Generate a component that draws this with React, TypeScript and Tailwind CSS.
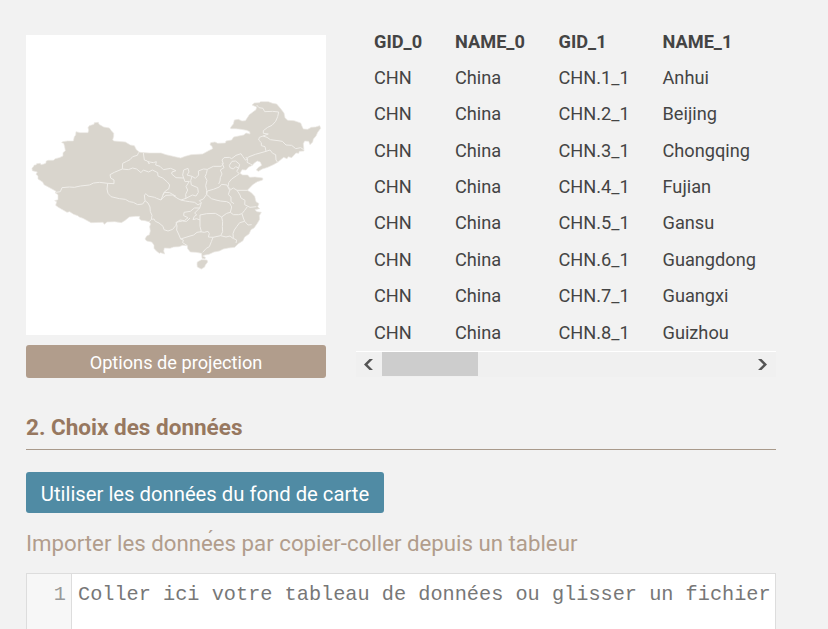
import React from "react";

const rows: [string, string][] = [
  ["CHN.1_1", "Anhui"],
  ["CHN.2_1", "Beijing"],
  ["CHN.3_1", "Chongqing"],
  ["CHN.4_1", "Fujian"],
  ["CHN.5_1", "Gansu"],
  ["CHN.6_1", "Guangdong"],
  ["CHN.7_1", "Guangxi"],
  ["CHN.8_1", "Guizhou"],
];

const mainland =
  "18,400 22,395 25,390 30,390 32,386 43,385 45,389 54,387 60,384 60,379 66,376 82,376 88,371 100,368 111,363 111,353 118,347 116,335 113,325 107,323 110,320 125,318 142,318 145,305 149,300 150,290 162,293 186,293 188,285 186,278 190,272 204,268 205,263 217,262 219,268 233,276 250,279 256,287 263,295 263,304 260,315 264,318 298,321 313,330 325,332 331,344 341,352 370,354 405,354 420,359 450,366 464,369 478,364 495,359 530,357 548,347 560,341 558,334 552,329 554,323 567,321 575,325 598,324 600,318 617,315 623,306 653,300 660,294 672,297 671,290 662,286 645,283 628,281 614,281 614,277 622,267 625,255 637,253 648,258 658,257 665,247 670,239 690,224 692,216 678,210 685,204 700,203 704,200 727,200 740,205 752,207 763,220 774,234 777,248 785,256 804,257 824,264 829,276 832,282 845,283 856,277 869,276 881,272 884,280 875,292 870,303 862,312 860,321 852,329 848,319 836,318 832,326 834,348 820,349 818,355 810,354 797,368 787,365 783,371 773,367 755,382 742,389 725,397 709,402 697,409 691,405 696,398 707,391 703,381 694,378 686,383 679,391 667,397 660,405 648,404 642,415 650,420 665,420 671,427 687,426 710,429 710,435 694,440 680,449 664,466 676,473 686,484 690,500 699,506 695,515 701,521 687,524 693,530 706,532 700,542 701,553 694,565 684,579 675,584 669,597 656,606 651,617 637,626 626,637 607,639 592,642 580,648 564,651 549,658 537,660 530,663 538,667 537,672 528,670 527,655 510,652 493,651 485,641 484,632 470,631 459,635 443,636 432,640 415,639 413,648 416,657 404,653 400,655 391,648 384,640 384,630 377,621 362,618 357,612 362,603 370,599 373,588 371,575 374,566 368,560 357,557 345,556 340,551 341,544 328,544 310,546 296,557 286,563 266,560 243,561 235,568 231,562 195,563 171,550 160,546 155,542 143,538 131,530 123,532 97,517 89,511 92,500 86,497 96,494 96,479 88,474 90,469 78,462 54,449 50,441 42,436 36,432 36,423 30,418 34,411 19,407";

const borders = [
  "338,352 334,361 320,365 312,374 302,379 290,385 289,402 265,412 252,419 254,429 264,435 264,446 245,445",
  "90,472 103,470 108,458 130,456 145,457 163,453 190,450 203,444 221,442 245,445 243,462 246,475 255,485 280,491 298,493 310,500 322,502 335,509 350,507 357,497 366,504 372,516 373,530 378,541 376,553 370,560",
  "289,402 307,404 320,399 332,402 345,413 352,405 368,411 379,405 395,413 396,423 410,429 424,441 431,450 428,462 418,468 411,480 405,495 392,490 386,487 366,483 360,476 355,480 357,497",
  "352,353 355,375 364,378 370,387 366,380 382,383 391,380 389,390 402,394 412,404 434,400 450,407 438,411 437,417 450,428 473,429 470,420 473,405 486,400 489,411 483,420 498,424 508,430 518,420 517,408 532,402 544,403 562,394 586,394 592,386 588,375 594,368 610,367 617,371 630,361 645,356 650,364 659,376 667,366 688,358 720,349 717,335 706,332 706,323 698,315 700,307 711,303 723,307 733,314 756,317 769,319 780,330 797,331 809,341 824,338 833,344",
  "692,210 699,218 711,220 716,230 740,229 758,231 755,245 749,259 738,271 725,277 712,287 712,295 727,297 711,303",
  "720,349 732,345 740,355 749,359 750,375 755,382",
  "659,366 665,372 663,382 673,387 680,391",
  "610,391 618,379 629,378 641,388 638,399 629,395 622,402 612,398 610,391",
  "638,399 632,409 640,416 632,422 617,432 608,443 606,455 613,462",
  "588,384 594,398 583,405 588,417 583,428 582,438 578,447",
  "544,403 541,416 537,425 543,436 539,452 542,466 541,478",
  "473,429 477,440 490,439 480,455 485,465 479,478 480,490 465,495 456,491 439,480 420,481 410,489 405,495",
  "480,490 499,480 510,483 517,472 515,458 496,450 494,437 498,424",
  "411,480 414,472 431,473 450,484",
  "464,495 478,498 490,500 506,502 516,510 526,503 520,497 532,492 542,478 544,468 562,463 580,456 587,448 603,450 611,466 622,459 633,466 664,466",
  "542,478 556,491 570,495 583,498 602,500 611,504 617,516 613,532 602,535 587,546 568,535 542,536 522,540 522,555 512,551 501,554 505,544 512,540 506,534 521,519 526,503",
  "521,519 505,519 493,529 474,532 473,542 486,548 475,557 462,555 453,561 449,572 440,583 426,588 414,584 411,574 399,564 388,559 384,552 376,553",
  "492,549 482,559 469,558 450,562 453,573 452,585 459,600 464,612 489,604 503,600 513,592 526,590 522,574 522,555",
  "464,612 472,615 470,623 484,632",
  "522,590 535,592 546,589 550,596 547,606 561,607 584,602 590,590 589,575 590,560 587,546",
  "561,607 556,620 550,635 541,640 530,652",
  "611,466 607,479 615,486 615,500 624,506",
  "633,466 642,480 645,489 657,496 656,509 672,517 691,515",
  "613,532 622,539 638,539 648,536 656,526 664,515",
  "648,536 652,549 656,559 666,570 677,569",
  "656,559 641,563 632,575 625,585 621,596 622,610 632,615 630,624",
  "584,602 600,606 612,603 622,611",
];

function ChinaMap() {
  return (
    <svg className="size-full" viewBox="0 0 900 900" fill="#d9d5cd" stroke="#ebe9e4" strokeWidth="2" strokeLinejoin="round">
      <polygon points={mainland} />
      <polygon points="514,681 527,674 543,675 545,681 538,690 536,696 526,702 514,696 513,687" />
      <g fill="none" stroke="#f0eeea" strokeWidth="3">
        {borders.map((points) => <polyline key={points} points={points} />)}
      </g>
    </svg>
  );
}

const columns = "grid grid-cols-[81px_103.5px_104px_1fr] pl-[18px]";

export default function App() {
  return (
    <main className="h-[629px] w-[828px] overflow-hidden bg-[#f2f2f2] px-[26px] pt-[35px] pr-[52px] font-[Roboto,sans-serif] text-[#444]">
      <div className="flex justify-between">
        <section className="w-[300px]">
          <div className="h-[300px] bg-white"><ChinaMap /></div>
          <button className="mt-[10px] flex h-[33px] w-full items-center justify-center rounded-[3px] bg-[#b19d8c] pt-[2px] text-[18.2px] text-white">
            Options de projection
          </button>
        </section>
        <section className="-mt-[11px] w-[420px] text-[18.2px] leading-[36.4px]">
          <div className={`${columns} h-[36px] font-bold`}>
            <span>GID_0</span><span>NAME_0</span><span>GID_1</span><span>NAME_1</span>
          </div>
          <div className="h-[291px]">
            {rows.map(([id, name]) => (
              <div className={`${columns} h-[36.36px]`} key={id}>
                <span>CHN</span><span>China</span><span>{id}</span><span>{name}</span>
              </div>
            ))}
          </div>
          <div className="flex h-[26px] items-center border-t border-white bg-[#f0f0f0]">
            <svg className="h-[25px] w-[26px]" viewBox="0 0 26 25" fill="#555"><path d="M8 12.5 13.5 7H17L11.5 12.5 17 18H13.5Z" /></svg>
            <div className="h-6 w-24 self-start bg-[#cdcdcd]" />
            <svg className="ml-auto h-[25px] w-[26px]" viewBox="0 0 26 25" fill="#555"><path d="M17 12.5 11.5 7H8L13.5 12.5 8 18H11.5Z" /></svg>
          </div>
        </section>
      </div>
      <h2 className="mt-[32px] h-[40px] border-b border-[#a99a8b] pt-px text-[22.5px] leading-[32px] font-bold text-[#977860]">
        2. Choix des données
      </h2>
      <button className="mt-[22px] flex h-[41px] w-[358px] items-center justify-center rounded-[3px] bg-[#508ba4] pt-[3px] text-[20.25px] whitespace-nowrap text-white">
        Utiliser les données du fond de carte
      </button>
      <p className="mt-[14px] h-[32px] text-[22.25px] leading-[32px] whitespace-nowrap text-[#b19d8c]">
        Importer les donne<span className="relative -top-px font-['Liberation_Sans',sans-serif] leading-none">{"\u0301"}</span>es par copier-coller depuis un tableur
      </p>
      <div className="mt-[14px] flex h-[80px] border border-[#ddd] bg-white font-['Courier_New','Liberation_Mono',monospace] text-[20.25px] leading-[32px]">
        <div className="w-[45px] border-r border-[#ddd] bg-[#f7f7f7] pt-[5px] pr-[5px] text-right text-[#999]">1</div>
        <div className="pt-[5px] pl-[6px] whitespace-nowrap text-[#777]">
          Coller ici votre tableau de données ou glisser un fichier
        </div>
      </div>
    </main>
  );
}
